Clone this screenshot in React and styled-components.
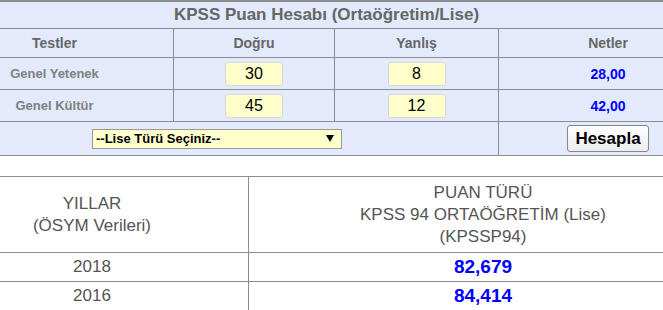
import React, { useState } from 'react';
import styled, { createGlobalStyle } from 'styled-components';

const GlobalStyle = createGlobalStyle`
    html, body {
        margin: 0;
        padding: 0;
        background: #fff;
        overflow: hidden;
    }
    body {
        font-family: "Liberation Sans", Arial, sans-serif;
    }
`

const Viewport = styled.div`
    width: 663px;
    height: 310px;
    overflow: hidden;
`

const Page = styled.div`
    width: 781px;
    margin-left: -64px;
`

const CalcTable = styled.div`
    display: grid;
    grid-template-columns: 237px 160px 163px 218px;
    grid-template-rows: 26px 28px 31px 31px 33px;
    gap: 1px;
    background-color: #8c8c8c;
    border-top: 2px solid #8c8c8c;
    border-bottom: 1px solid #8c8c8c;
`

const Cell = styled.div`
    background-color: #e2eafc;
    display: flex;
    align-items: center;
    justify-content: center;
    grid-column: ${props => props.$span ? `span ${props.$span}` : 'auto'};
`

const Title = styled(Cell)`
    font-size: 17px;
    font-weight: bold;
    color: #666;
`

const Head = styled(Cell)`
    font-size: 14px;
    font-weight: bold;
    color: #666;
`

const Label = styled(Cell)`
    font-size: 13px;
    font-weight: bold;
    color: #808080;
`

const Net = styled(Cell)`
    font-size: 14px;
    font-weight: bold;
    color: #0000ff;
`

const NumInput = styled.input`
    box-sizing: border-box;
    width: 58px;
    height: 24px;
    background-color: #ffffcc;
    border: 1px solid #d8d8d8;
    border-radius: 3px;
    font-family: "Liberation Sans", Arial, sans-serif;
    font-size: 16px;
    color: #000;
    text-align: center;
    padding: 0;
    outline: none;
`

const SelectWrap = styled.div`
    position: relative;
    width: 250px;
    height: 20px;
`

const Select = styled.select`
    appearance: none;
    box-sizing: border-box;
    width: 100%;
    height: 100%;
    background-color: #ffffcc;
    border: 1px solid #999;
    border-radius: 0;
    font-family: "Liberation Sans", Arial, sans-serif;
    font-size: 13px;
    font-weight: bold;
    color: #000;
    padding: 0 0 0 3px;
    outline: none;
`

const Arrow = styled.span`
    position: absolute;
    right: 8px;
    top: 6px;
    width: 0;
    height: 0;
    border-left: 4px solid transparent;
    border-right: 4px solid transparent;
    border-top: 7px solid #000;
    pointer-events: none;
`

const Button = styled.button`
    box-sizing: border-box;
    width: 82px;
    height: 27px;
    background: linear-gradient(#ffffff, #ececec);
    border: 1px solid #888;
    border-radius: 3px;
    font-family: "Liberation Sans", Arial, sans-serif;
    font-size: 17px;
    font-weight: bold;
    color: #000;
    padding: 0;
    cursor: pointer;
`

const ResultTable = styled.div`
    margin-top: 20px;
    display: grid;
    grid-template-columns: 312px 468px;
    grid-template-rows: 75px 28px 28px;
    gap: 1px;
    background-color: #8c8c8c;
    border-top: 1px solid #8c8c8c;
    border-bottom: 1px solid #8c8c8c;
`

const RCell = styled.div`
    background-color: #fff;
    display: flex;
    flex-direction: column;
    align-items: center;
    justify-content: center;
    font-size: 17px;
    line-height: 22px;
    color: #555;
    text-align: center;
`

const Score = styled(RCell)`
    font-size: 19px;
    font-weight: bold;
    color: #0000ff;
`

const rows = [
    { name: 'Genel Yetenek', d: '30', y: '8', net: '28,00' },
    { name: 'Genel Kültür', d: '45', y: '12', net: '42,00' },
];

const years = [
    { year: '2018', score: '82,679' },
    { year: '2016', score: '84,414' },
];

export default function App() {
    const [lise, setLise] = useState('');

    return (
        <Viewport>
            <GlobalStyle />
            <Page>
                <CalcTable>
                    <Title $span={4}>KPSS Puan Hesabı (Ortaöğretim/Lise)</Title>
                    <Head>Testler</Head>
                    <Head>Doğru</Head>
                    <Head>Yanlış</Head>
                    <Head>Netler</Head>
                    {rows.map(r => (
                        <React.Fragment key={r.name}>
                            <Label>{r.name}</Label>
                            <Cell><NumInput defaultValue={r.d} /></Cell>
                            <Cell><NumInput defaultValue={r.y} /></Cell>
                            <Net>{r.net}</Net>
                        </React.Fragment>
                    ))}
                    <Cell $span={3}>
                        <SelectWrap>
                            <Select value={lise} onChange={e => setLise(e.target.value)}>
                                <option value="">--Lise Türü Seçiniz--</option>
                                <option value="genel">Genel Lise</option>
                                <option value="meslek">Meslek Lisesi</option>
                            </Select>
                            <Arrow />
                        </SelectWrap>
                    </Cell>
                    <Cell><Button>Hesapla</Button></Cell>
                </CalcTable>

                <ResultTable>
                    <RCell>
                        <div>YILLAR</div>
                        <div>(ÖSYM Verileri)</div>
                    </RCell>
                    <RCell>
                        <div>PUAN TÜRÜ</div>
                        <div>KPSS 94 ORTAÖĞRETİM (Lise)</div>
                        <div>(KPSSP94)</div>
                    </RCell>
                    {years.map(y => (
                        <React.Fragment key={y.year}>
                            <RCell>{y.year}</RCell>
                            <Score>{y.score}</Score>
                        </React.Fragment>
                    ))}
                </ResultTable>
            </Page>
        </Viewport>
    );
}
